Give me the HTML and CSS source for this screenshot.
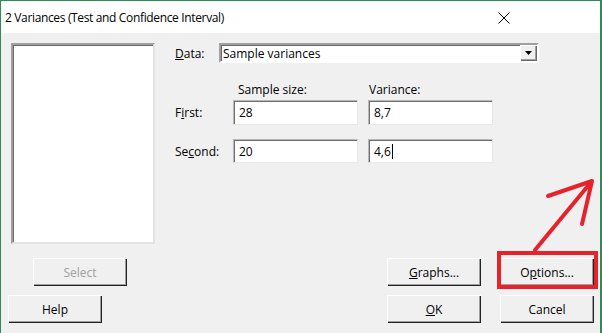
FILE: index.html
```html
<!DOCTYPE html>
<html lang="en">
<head>
    <meta charset="UTF-8">
    <title>2 Variances (Test and Confidence Interval)</title>
    <link rel="stylesheet" href="styles.css">
</head>
<body>
    <div class="window">
        <div class="titlebar">
            <span class="title">2 Variances (Test and Confidence Interval)</span>
            <svg class="close" width="12" height="12" viewBox="0 0 12 12">
                <path d="M0.5 0.5 L11.5 11.5 M11.5 0.5 L0.5 11.5" stroke="#000" stroke-width="1" fill="none"/>
            </svg>
        </div>

        <div class="content">
            <div class="top">
                <div class="listbox"></div>

                <div class="form">
                    <div class="data-row">
                        <label class="lbl"><u>D</u>ata:</label>
                        <div class="combo">
                            <span class="combo-text">Sample variances</span>
                            <span class="combo-btn">
                                <svg width="8" height="5" viewBox="0 0 8 5"><path d="M0 0 H7 L3.5 4 Z" fill="#000"/></svg>
                            </span>
                        </div>
                    </div>

                    <div class="headers">
                        <span class="head-size">Sample size:</span>
                        <span class="head-var">Variance:</span>
                    </div>

                    <div class="field-row first">
                        <label class="lbl">F<u>i</u>rst:</label>
                        <div class="field">28</div>
                        <div class="field">8,7</div>
                    </div>

                    <div class="field-row second">
                        <label class="lbl">Se<u>c</u>ond:</label>
                        <div class="field">20</div>
                        <div class="field">4,6<span class="caret"></span></div>
                    </div>
                </div>
            </div>

            <div class="btn-row row-one">
                <button class="btn disabled">Select</button>
                <div class="spacer"></div>
                <button class="btn"><u>G</u>raphs...</button>
                <button class="btn">O<u>p</u>tions...</button>
            </div>

            <div class="btn-row row-two">
                <button class="btn">Help</button>
                <div class="spacer"></div>
                <button class="btn"><u>O</u>K</button>
                <button class="btn">Cancel</button>
            </div>
        </div>

        <!-- annotation drawn over the dialog -->
        <div class="highlight"></div>
        <svg class="arrow" width="602" height="333" viewBox="0 0 602 333">
            <path d="M535 250 L592 181 M548 196 L592 181 L582 224" stroke="#e8222a" stroke-width="4" fill="none" stroke-linecap="round" stroke-linejoin="round"/>
        </svg>
    </div>
</body>
</html>
```

FILE: styles.css
```css
body { margin: 0; background: #f0f0f0; font-family: "Open Sans", "Noto Sans", sans-serif; font-size: 12px; color: #000; }
.window { position: relative; width: 602px; height: 333px; box-sizing: border-box; border: 1px solid #2f8a55; border-bottom: none; border-right-width: 2px; background: #f0f0f0; overflow: hidden; }

.titlebar { height: 32px; background: #fff; display: flex; align-items: center; padding-left: 4px; padding-right: 90px; }
.title { font-size: 12px; flex: 1; letter-spacing: -0.35px; }
.close { display: block; margin-top: 1px; }

.content { display: flex; flex-direction: column; }
.top { display: flex; height: 215px; }
.listbox { width: 140px; height: 197px; margin: 10px 0 0 10px; background: #fff; border: 2px solid; border-color: #a0a0a0 #e3e3e3 #e3e3e3 #a0a0a0; box-shadow: inset 1px 1px 0 #696969, inset -1px -1px 0 #fff; }

.form { margin-left: 20px; margin-top: 10px; }
.lbl { display: inline-block; width: 44px; }
.data-row { display: flex; align-items: center; height: 20px; }
.combo { width: 316px; height: 16px; display: flex; align-items: center; background: #fff; border: 2px solid; border-color: #a0a0a0 #fff #fff #a0a0a0; box-shadow: inset 1px 1px 0 #696969; }
.combo-text { flex: 1; padding-left: 2px; }
.combo-btn { width: 17px; height: 16px; display: flex; align-items: center; justify-content: center; background: #f0f0f0; border-left: 1px solid #fff; border-top: 1px solid #fff; box-sizing: border-box; box-shadow: inset -1px -1px 0 #696969, inset -2px -2px 0 #a0a0a0; }

.headers { display: flex; margin-top: 18px; height: 18px; padding-left: 63px; }
.head-size { width: 131px; }

.field-row { display: flex; align-items: center; }
.field-row.first { margin-top: 1px; height: 25px; }
.field-row.second { margin-top: 14px; height: 24px; }
.field-row .lbl { width: 58px; }
.field { width: 125px; height: 100%; box-sizing: border-box; margin-right: 10px; padding-left: 5px; display: flex; align-items: center; background: #fff; border: 1px solid #b8b8b8; border-right-color: #e8e8e8; border-bottom-color: #e8e8e8; box-shadow: inset 1px 1px 0 #707070; }
.caret { display: inline-block; width: 1px; height: 15px; background: #000; margin-left: 1px; }

.btn-row { display: flex; gap: 19px; padding-right: 6px; }
.row-one { margin-top: 10px; padding-left: 32px; }
.row-two { margin-top: 9px; padding-left: 7px; }
.spacer { flex: 1; }
.btn { width: 94px; height: 28px; font-family: inherit; font-size: 12px; color: #000; background: #f0f0f0; border: none; border-radius: 0; padding: 0; box-shadow: inset 1px 1px 0 #fff, inset -1px -1px 0 #222, inset -2px -2px 0 #a0a0a0; }
.btn.disabled { color: #a0a0a0; }

.highlight { position: absolute; left: 496px; top: 250px; width: 93px; height: 30px; border: 4px solid #e8222a; }
.arrow { position: absolute; left: -1px; top: -1px; }
```
